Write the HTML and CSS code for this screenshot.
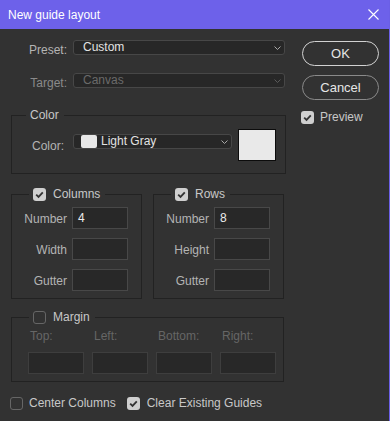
FILE: index.html
```html
<!DOCTYPE html>
<html>
<head>
<meta charset="utf-8">
<link rel="stylesheet" href="styles.css">
</head>
<body>
<div class="window">
  <div class="titlebar">
    <span class="title">New guide layout</span>
    <svg class="close" width="11" height="11" viewBox="0 0 11 11"><path d="M0.5 0.5 L10.5 10.5 M10.5 0.5 L0.5 10.5" stroke="#fff" stroke-width="1.1" fill="none"/></svg>
  </div>
  <div class="content">
    <div class="main">
      <div class="field-row">
        <span class="lbl">Preset:</span>
        <div class="select wide"><span class="value">Custom</span><svg class="chev" width="7" height="4" viewBox="0 0 7 4"><path d="M0.5 0.5 L3.5 3.5 L6.5 0.5" stroke="#a8a8a8" fill="none"/></svg></div>
      </div>
      <div class="field-row second">
        <span class="lbl dim">Target:</span>
        <div class="select wide disabled"><span class="value">Canvas</span><svg class="chev" width="7" height="4" viewBox="0 0 7 4"><path d="M0.5 0.5 L3.5 3.5 L6.5 0.5" stroke="#5a5a5a" fill="none"/></svg></div>
      </div>

      <div class="group color-group">
        <div class="group-title"><span>Color</span></div>
        <div class="color-row">
          <span class="lbl color-lbl">Color:</span>
          <div class="select color-select"><span class="mini-swatch"></span><span class="value">Light Gray</span><svg class="chev" width="7" height="4" viewBox="0 0 7 4"><path d="M0.5 0.5 L3.5 3.5 L6.5 0.5" stroke="#a8a8a8" fill="none"/></svg></div>
          <div class="swatch"></div>
        </div>
      </div>

      <div class="pair">
        <div class="group small-group">
          <div class="group-title"><span class="cb checked"><svg width="13" height="13" viewBox="0 0 13 13"><path d="M3.2 6.6 L5.5 8.9 L9.8 4.3" stroke="#333" stroke-width="1.8" fill="none"/></svg></span><span>Columns</span></div>
          <div class="field-grid">
            <span class="lbl">Number</span><div class="input"><span class="value">4</span></div>
            <span class="lbl">Width</span><div class="input"></div>
            <span class="lbl">Gutter</span><div class="input"></div>
          </div>
        </div>
        <div class="group small-group">
          <div class="group-title"><span class="cb checked"><svg width="13" height="13" viewBox="0 0 13 13"><path d="M3.2 6.6 L5.5 8.9 L9.8 4.3" stroke="#333" stroke-width="1.8" fill="none"/></svg></span><span>Rows</span></div>
          <div class="field-grid">
            <span class="lbl">Number</span><div class="input"><span class="value">8</span></div>
            <span class="lbl">Height</span><div class="input"></div>
            <span class="lbl">Gutter</span><div class="input"></div>
          </div>
        </div>
      </div>

      <div class="group margin-group">
        <div class="group-title"><span class="cb"></span><span>Margin</span></div>
        <div class="margin-grid">
          <span class="mlbl">Top:</span>
          <span class="mlbl">Left:</span>
          <span class="mlbl">Bottom:</span>
          <span class="mlbl">Right:</span>
          <div class="input"></div>
          <div class="input"></div>
          <div class="input"></div>
          <div class="input"></div>
        </div>
      </div>

      <div class="bottom-row">
        <label class="check"><span class="cb"></span><span>Center Columns</span></label>
        <label class="check"><span class="cb checked"><svg width="13" height="13" viewBox="0 0 13 13"><path d="M3.2 6.6 L5.5 8.9 L9.8 4.3" stroke="#333" stroke-width="1.8" fill="none"/></svg></span><span>Clear Existing Guides</span></label>
      </div>
    </div>

    <div class="side">
      <div class="btn primary">OK</div>
      <div class="btn">Cancel</div>
      <label class="check preview"><span class="cb checked"><svg width="13" height="13" viewBox="0 0 13 13"><path d="M3.2 6.6 L5.5 8.9 L9.8 4.3" stroke="#333" stroke-width="1.8" fill="none"/></svg></span><span>Preview</span></label>
    </div>
  </div>
</div>
</body>
</html>
```

FILE: styles.css
```css
* { box-sizing: border-box; }
html, body {
  margin: 0;
  padding: 0;
  background: #323232;
}
body {
  font-family: "Liberation Sans", Arial, sans-serif;
  font-size: 12px;
  color: #b8b8b8;
}
.window {
  width: 390px;
  height: 421px;
  background: #323232;
  border-right: 1px solid #6b5fe6;
  overflow: hidden;
}
.titlebar {
  height: 29px;
  background: #6d61ea;
  display: flex;
  align-items: center;
  justify-content: space-between;
  padding: 0 10px 0 8px;
}
.title {
  color: #ffffff;
  font-size: 12px;
  line-height: 16px;
  padding-top: 1px;
}
.close { display: block; }

.content {
  display: flex;
  padding-left: 11px;
}
.main {
  width: 275px;
  padding-top: 11px;
  display: flex;
  flex-direction: column;
}
.side {
  margin-left: 16px;
  width: 77px;
  padding-top: 12px;
  display: flex;
  flex-direction: column;
}

.lbl {
  color: #b4b4b4;
  line-height: 15px;
  white-space: nowrap;
}
.dim { color: #8a8a8a; }

.field-row {
  display: flex;
  align-items: flex-start;
  height: 15px;
}
.field-row .lbl {
  width: 56px;
  text-align: right;
  padding-top: 3px;
  margin-right: 6px;
}
.field-row.second { margin-top: 18px; }

.select {
  height: 15px;
  background: #272727;
  border: 1px solid #474747;
  border-radius: 3px;
  display: flex;
  align-items: center;
  padding: 0 3px 0 9px;
}
.select .value {
  flex: 1;
  color: #e2e2e2;
  line-height: 13px;
  font-size: 12px;
}
.select.disabled .value { color: #6a6a6a; }
.select.wide { width: 212px; }
.chev { display: block; flex: none; }

.group {
  border: 1px solid #222222;
  display: flex;
  flex-direction: column;
}
.group-title {
  align-self: flex-start;
  height: 16px;
  margin-top: -9px;
  background: #323232;
  display: flex;
  align-items: center;
  gap: 7px;
  padding: 0 5px 0 4px;
  color: #c8c8c8;
  line-height: 16px;
}

.color-group {
  margin-top: 27px;
  width: 275px;
}
.color-group .group-title { margin-left: 14px; }
.color-row {
  display: flex;
  align-items: center;
  margin-top: 6px;
  margin-bottom: 12px;
}
.color-lbl {
  width: 52px;
  text-align: right;
  margin-right: 9px;
  padding-top: 3px;
}
.color-select {
  width: 159px;
  align-self: flex-start;
  margin-top: 5px;
  padding-left: 7px;
}
.mini-swatch {
  width: 16px;
  height: 13px;
  background: #e8e8e8;
  border-radius: 2px;
  margin-right: 4px;
  flex: none;
}
.swatch {
  width: 38px;
  height: 32px;
  background: #e9e9e9;
  border: 1px solid #0c0c0c;
  margin-left: 6px;
}

.pair {
  display: flex;
  gap: 11px;
  margin-top: 20px;
}
.small-group {
  width: 131px;
}
.small-group .group-title { margin-left: 17px; padding-left: 4px; }

.cb {
  width: 13px;
  height: 13px;
  border: 1px solid #666666;
  border-radius: 3px;
  flex: none;
  display: block;
}
.cb.checked {
  border: none;
  background: #cfcfcf;
}
.cb svg { display: block; }

.field-grid {
  display: grid;
  grid-template-columns: 55px 56px;
  grid-auto-rows: 22px;
  column-gap: 5px;
  row-gap: 9px;
  margin-top: 5px;
  margin-bottom: 7px;
  align-items: center;
}
.field-grid .lbl {
  text-align: right;
  padding-top: 2px;
}
.input {
  height: 22px;
  background: #282828;
  border: 1px solid #484848;
  display: flex;
  align-items: center;
  padding-left: 5px;
}
.input .value {
  color: #ececec;
}

.margin-group {
  margin-top: 18px;
  width: 273px;
}
.margin-group .group-title { margin-left: 17px; padding-left: 4px; }
.margin-grid {
  display: grid;
  grid-template-columns: repeat(4, 56px);
  grid-template-rows: 16px 22px;
  column-gap: 8px;
  row-gap: 8px;
  padding-left: 16px;
  margin-top: 3px;
  margin-bottom: 7px;
}
.margin-grid .input { border-color: #3e3e3e; }
.mlbl {
  color: #666666;
  line-height: 16px;
  padding-left: 2px;
}

.check {
  display: flex;
  align-items: center;
  gap: 6px;
  color: #c8c8c8;
  line-height: 16px;
}
.bottom-row {
  display: flex;
  gap: 11px;
  margin-top: 13px;
  margin-left: -1px;
}
.bottom-row .check + .check { gap: 7px; }

.btn {
  height: 25px;
  border: 1.5px solid #8a8a8a;
  border-radius: 13px;
  display: flex;
  align-items: center;
  justify-content: center;
  color: #e6e6e6;
  font-size: 13px;
  margin-bottom: 9px;
}
.btn.primary { border-color: #d2d2d2; }
.preview {
  margin-top: 0;
  margin-left: -1px;
}
```
